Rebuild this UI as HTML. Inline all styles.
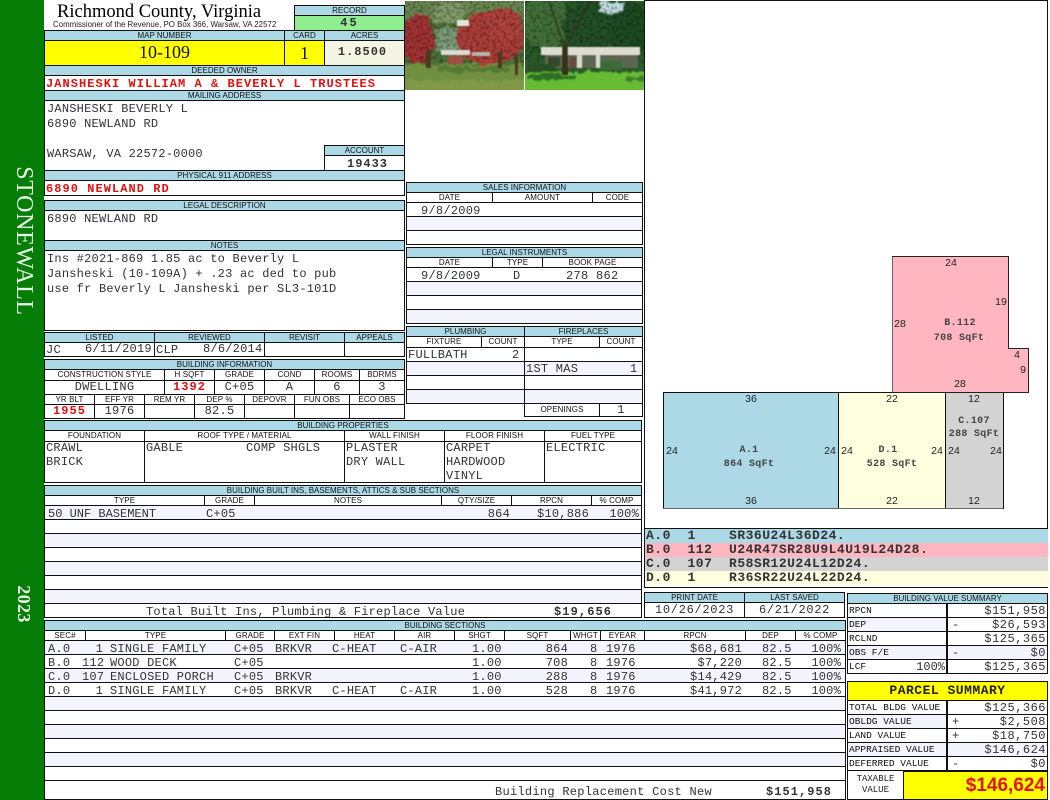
<!DOCTYPE html>
<html><head><meta charset="utf-8"><title>Richmond County, Virginia</title>
<style>
html,body{margin:0;padding:0;background:#fff;width:1050px;height:800px;overflow:hidden}
#p{position:relative;width:1050px;height:800px;overflow:hidden;background:#fff}
.c,.h,.m,.t,.s{position:absolute;box-sizing:border-box;overflow:hidden;white-space:pre}
.c{border:1px solid #111}
.h{border:1px solid #111;background:#add8e6;text-align:center;font:8px/9px "Liberation Sans",sans-serif;color:#111}
.w{background:#fff;letter-spacing:.1px}
.m{border:1px solid #111;font:12px/13px "Liberation Mono",monospace;color:#333;letter-spacing:.25px;padding:0 1px}
.t{font:12px/15px "Liberation Mono",monospace;color:#333;letter-spacing:.22px}
.r{text-align:right}.ct{text-align:center}
.a{background:#f4f4ff}
.red{color:#e01010;font-weight:bold;font-size:12px;letter-spacing:1.05px}
.s{font:9.5px/14px "Liberation Mono",monospace;color:#111;border:1px solid #111;padding-left:1px}
.b2{border-bottom:3px solid #111}
.l{position:absolute;font:10.5px/12px "Liberation Sans",sans-serif;color:#222;white-space:pre;transform:translateX(-50%)}
.k{position:absolute;font:bold 10px/12px "Liberation Mono",monospace;color:#444;letter-spacing:.3px;white-space:pre;transform:translateX(-50%)}
.code{position:absolute;font:bold 13px/14px "Liberation Mono",monospace;color:#333;letter-spacing:.5px;white-space:pre;left:645px;width:402px;height:14px;padding-left:1px}
.v{position:absolute;box-sizing:border-box;overflow:hidden;white-space:pre;border:1px solid #111;border-left-width:2px;font:12px/15px "Liberation Mono",monospace;color:#333;letter-spacing:.5px;text-align:right;padding-right:1px;left:946px;width:102px;height:15px}
.v span{position:absolute;left:4px;top:0}
.q{line-height:14px}
</style></head><body><div id="p">
<div style="position:absolute;left:0;top:0;width:44px;height:800px;background:#067d06"></div>
<div style="position:absolute;left:23.5px;top:240.5px;transform:translate(-50%,-50%) rotate(90deg);font:24px/26px 'Liberation Serif',serif;color:#e8f4e8;letter-spacing:.65px;white-space:pre">STONEWALL</div>
<div style="position:absolute;left:24px;top:604px;transform:translate(-50%,-50%) rotate(90deg);font:bold 18px/22px 'Liberation Serif',serif;color:#e8f4e8;letter-spacing:.4px;white-space:pre">2023</div>

<div class="t" style="left:57px;top:2px;font:18.5px/20px 'Liberation Serif',serif;color:#000;letter-spacing:0">Richmond County, Virginia</div>
<div class="t" style="left:53px;top:20px;font:7.9px/10px 'Liberation Sans',sans-serif;color:#222;letter-spacing:0">Commissioner of the Revenue, PO Box 366, Warsaw, VA 22572</div>
<div class="h" style="left:294px;top:5px;width:111px;height:11px">RECORD</div>
<div class="c" style="left:294px;top:15px;width:111px;height:16px;background:#90ee90;font:bold 12px/15px 'Liberation Mono',monospace;text-align:center;color:#333;letter-spacing:2px">45</div>
<div class="h" style="left:44px;top:30px;width:241px;height:11px">MAP NUMBER</div>
<div class="h" style="left:284px;top:30px;width:41px;height:11px">CARD</div>
<div class="h" style="left:324px;top:30px;width:81px;height:11px">ACRES</div>
<div class="c" style="left:44px;top:40px;width:241px;height:26px;background:#ff0;text-align:center;font:18px/23px 'Liberation Serif',serif;color:#111">10-109</div>
<div class="c" style="left:284px;top:40px;width:41px;height:26px;background:#ff0;text-align:center;font:18px/24px 'Liberation Serif',serif;color:#111">1</div>
<div class="c" style="left:324px;top:40px;width:81px;height:26px;background:#f5f5e4;text-align:center;font:bold 12px/23px 'Liberation Mono',monospace;letter-spacing:1px;color:#333;padding-right:4px">1.8500</div>
<div class="h" style="left:44px;top:65px;width:361px;height:11px">DEEDED OWNER</div>
<div class="m red" style="left:44px;top:75px;width:361px;height:16px;line-height:16px">JANSHESKI WILLIAM A &amp; BEVERLY L TRUSTEES</div>
<div class="h" style="left:44px;top:90px;width:361px;height:11px">MAILING ADDRESS</div>
<div class="c" style="left:44px;top:100px;width:361px;height:71px"></div>
<div class="t" style="left:47px;top:102px">JANSHESKI BEVERLY L
6890 NEWLAND RD

WARSAW, VA 22572-0000</div>
<div class="h" style="left:324px;top:145px;width:81px;height:11px">ACCOUNT</div>
<div class="m" style="left:324px;top:155px;width:81px;height:16px;font-weight:bold;letter-spacing:1px;line-height:16px;padding-left:22px">19433</div>
<div class="h" style="left:44px;top:170px;width:361px;height:11px">PHYSICAL 911 ADDRESS</div>
<div class="m red" style="left:44px;top:180px;width:361px;height:16px;line-height:16px">6890 NEWLAND RD</div>

<div class="h" style="left:44px;top:200px;width:361px;height:11px">LEGAL DESCRIPTION</div>
<div class="c" style="left:44px;top:210px;width:361px;height:31px"></div>
<div class="t" style="left:47px;top:212px">6890 NEWLAND RD</div>
<div class="h" style="left:44px;top:240px;width:361px;height:11px">NOTES</div>
<div class="c" style="left:44px;top:250px;width:361px;height:81px"></div>
<div class="t" style="left:47px;top:252px">Ins #2021-869 1.85 ac to Beverly L
Jansheski (10-109A) + .23 ac ded to pub
use fr Beverly L Jansheski per SL3-101D</div>

<div class="h" style="left:44px;top:332px;width:111px;height:11px">LISTED</div>
<div class="h" style="left:154px;top:332px;width:111px;height:11px">REVIEWED</div>
<div class="h" style="left:264px;top:332px;width:81px;height:11px">REVISIT</div>
<div class="h" style="left:344px;top:332px;width:61px;height:11px">APPEALS</div>
<div class="m" style="left:44px;top:342px;width:111px;height:15px;line-height:15px">JC</div>
<div class="t" style="left:85px;top:342px;line-height:15px">6/11/2019</div>
<div class="m" style="left:154px;top:342px;width:111px;height:15px;line-height:15px">CLP</div>
<div class="t" style="left:203px;top:342px;line-height:15px">8/6/2014</div>
<div class="m" style="left:264px;top:342px;width:81px;height:15px"></div>
<div class="m" style="left:344px;top:342px;width:61px;height:15px"></div>

<div class="h" style="left:44px;top:359px;width:361px;height:11px">BUILDING INFORMATION</div>
<div class="h w" style="left:44px;top:369px;width:121px;height:12px">CONSTRUCTION STYLE</div>
<div class="h w" style="left:164px;top:369px;width:51px;height:12px">H SQFT</div>
<div class="h w" style="left:214px;top:369px;width:51px;height:12px">GRADE</div>
<div class="h w" style="left:264px;top:369px;width:51px;height:12px">COND</div>
<div class="h w" style="left:314px;top:369px;width:46px;height:12px">ROOMS</div>
<div class="h w" style="left:359px;top:369px;width:46px;height:12px">BDRMS</div>
<div class="m ct" style="left:44px;top:380px;width:121px;height:15px">DWELLING</div>
<div class="m ct red" style="left:164px;top:380px;width:51px;height:15px">1392</div>
<div class="m ct" style="left:214px;top:380px;width:51px;height:15px">C+05</div>
<div class="m ct" style="left:264px;top:380px;width:51px;height:15px">A</div>
<div class="m ct" style="left:314px;top:380px;width:46px;height:15px">6</div>
<div class="m ct" style="left:359px;top:380px;width:46px;height:15px">3</div>
<div class="h w" style="left:44px;top:394px;width:51px;height:11px">YR BLT</div>
<div class="h w" style="left:94px;top:394px;width:51px;height:11px">EFF YR</div>
<div class="h w" style="left:144px;top:394px;width:51px;height:11px">REM YR</div>
<div class="h w" style="left:194px;top:394px;width:51px;height:11px">DEP %</div>
<div class="h w" style="left:244px;top:394px;width:51px;height:11px">DEPOVR</div>
<div class="h w" style="left:294px;top:394px;width:56px;height:11px">FUN OBS</div>
<div class="h w" style="left:349px;top:394px;width:56px;height:11px">ECO OBS</div>
<div class="m ct red" style="left:44px;top:404px;width:51px;height:15px">1955</div>
<div class="m ct" style="left:94px;top:404px;width:51px;height:15px">1976</div>
<div class="m" style="left:144px;top:404px;width:51px;height:15px"></div>
<div class="m ct" style="left:194px;top:404px;width:51px;height:15px">82.5</div>
<div class="m" style="left:244px;top:404px;width:51px;height:15px"></div>
<div class="m" style="left:294px;top:404px;width:56px;height:15px"></div>
<div class="m" style="left:349px;top:404px;width:56px;height:15px"></div>

<div class="h" style="left:44px;top:420px;width:598px;height:11px">BUILDING PROPERTIES</div>
<div class="h w" style="left:44px;top:430px;width:101px;height:12px">FOUNDATION</div>
<div class="h w" style="left:144px;top:430px;width:201px;height:12px">ROOF TYPE / MATERIAL</div>
<div class="h w" style="left:344px;top:430px;width:101px;height:12px">WALL FINISH</div>
<div class="h w" style="left:444px;top:430px;width:101px;height:12px">FLOOR FINISH</div>
<div class="h w" style="left:544px;top:430px;width:98px;height:12px">FUEL TYPE</div>
<div class="c" style="left:44px;top:441px;width:101px;height:42px"></div>
<div class="c" style="left:144px;top:441px;width:201px;height:42px"></div>
<div class="c" style="left:344px;top:441px;width:101px;height:42px"></div>
<div class="c" style="left:444px;top:441px;width:101px;height:42px"></div>
<div class="c" style="left:544px;top:441px;width:98px;height:42px"></div>
<div class="t" style="left:46px;top:441px;line-height:14px">CRAWL
BRICK</div>
<div class="t" style="left:146px;top:441px;line-height:14px">GABLE</div>
<div class="t" style="left:246px;top:441px;line-height:14px">COMP SHGLS</div>
<div class="t" style="left:346px;top:441px;line-height:14px">PLASTER
DRY WALL</div>
<div class="t" style="left:446px;top:441px;line-height:14px">CARPET
HARDWOOD
VINYL</div>
<div class="t" style="left:546px;top:441px;line-height:14px">ELECTRIC</div>

<div class="h" style="left:44px;top:485px;width:598px;height:11px">BUILDING BUILT INS, BASEMENTS, ATTICS &amp; SUB SECTIONS</div>
<div class="h w" style="left:44px;top:495px;width:161px;height:11px">TYPE</div>
<div class="h w" style="left:204px;top:495px;width:51px;height:11px">GRADE</div>
<div class="h w" style="left:254px;top:495px;width:188px;height:11px">NOTES</div>
<div class="h w" style="left:441px;top:495px;width:71px;height:11px">QTY/SIZE</div>
<div class="h w" style="left:511px;top:495px;width:81px;height:11px">RPCN</div>
<div class="h w" style="left:591px;top:495px;width:51px;height:11px">% COMP</div>
<div class="m a" style="left:44px;top:505px;width:598px;height:15px"></div>
<div class="t q" style="left:48px;top:507px;letter-spacing:0">50 UNF BASEMENT</div>
<div class="t q" style="left:206px;top:507px">C+05</div>
<div class="t r q" style="left:441px;top:507px;width:69px">864</div>
<div class="t r q" style="left:511px;top:507px;width:78px">$10,886</div>
<div class="t r q" style="left:591px;top:507px;width:48px">100%</div>
<div class="m" style="left:44px;top:519px;width:598px;height:15px"></div>
<div class="m a" style="left:44px;top:533px;width:598px;height:15px"></div>
<div class="m" style="left:44px;top:547px;width:598px;height:15px"></div>
<div class="m a" style="left:44px;top:561px;width:598px;height:15px"></div>
<div class="m" style="left:44px;top:575px;width:598px;height:15px"></div>
<div class="m a" style="left:44px;top:589px;width:598px;height:15px"></div>
<div class="c" style="left:44px;top:603px;width:598px;height:15px"></div>
<div class="t q" style="left:146px;top:605px">Total Built Ins, Plumbing &amp; Fireplace Value</div>
<div class="t q" style="left:554px;top:605px;font-weight:bold;letter-spacing:1.1px">$19,656</div>

<div class="h" style="left:44px;top:620px;width:802px;height:11px">BUILDING SECTIONS</div>
<div class="h w" style="left:44px;top:630px;width:42px;height:11px">SEC#</div>
<div class="h w" style="left:85px;top:630px;width:141px;height:11px">TYPE</div>
<div class="h w" style="left:225px;top:630px;width:50px;height:11px">GRADE</div>
<div class="h w" style="left:274px;top:630px;width:61px;height:11px">EXT FIN</div>
<div class="h w" style="left:334px;top:630px;width:61px;height:11px">HEAT</div>
<div class="h w" style="left:394px;top:630px;width:61px;height:11px">AIR</div>
<div class="h w" style="left:454px;top:630px;width:51px;height:11px">SHGT</div>
<div class="h w" style="left:504px;top:630px;width:67px;height:11px">SQFT</div>
<div class="h w" style="left:570px;top:630px;width:31px;height:11px">WHGT</div>
<div class="h w" style="left:600px;top:630px;width:45px;height:11px">EYEAR</div>
<div class="h w" style="left:644px;top:630px;width:102px;height:11px">RPCN</div>
<div class="h w" style="left:745px;top:630px;width:51px;height:11px">DEP</div>
<div class="h w" style="left:795px;top:630px;width:51px;height:11px">% COMP</div>
<div class="m a" style="left:44px;top:640px;width:802px;height:15px"></div>
<div class="m" style="left:44px;top:654px;width:802px;height:15px"></div>
<div class="m a" style="left:44px;top:668px;width:802px;height:15px"></div>
<div class="m" style="left:44px;top:682px;width:802px;height:15px"></div>
<div class="m a" style="left:44px;top:696px;width:802px;height:15px"></div>
<div class="m" style="left:44px;top:710px;width:802px;height:15px"></div>
<div class="m a" style="left:44px;top:724px;width:802px;height:15px"></div>
<div class="m" style="left:44px;top:738px;width:802px;height:15px"></div>
<div class="m a" style="left:44px;top:752px;width:802px;height:15px"></div>
<div class="m" style="left:44px;top:766px;width:802px;height:15px"></div>
<div class="c" style="left:44px;top:780px;width:802px;height:20px"></div>

<div class="t q" style="left:48px;top:642px">A.0</div><div class="t r q" style="left:82px;top:642px;width:21px">1</div><div class="t q" style="left:110px;top:642px">SINGLE FAMILY</div><div class="t q" style="left:234px;top:642px">C+05</div><div class="t q" style="left:275px;top:642px">BRKVR</div><div class="t q" style="left:332px;top:642px">C-HEAT</div><div class="t q" style="left:400px;top:642px">C-AIR</div><div class="t q" style="left:472px;top:642px">1.00</div><div class="t r q" style="left:510px;top:642px;width:58px">864</div><div class="t q" style="left:590px;top:642px">8</div><div class="t q" style="left:606px;top:642px">1976</div><div class="t r q" style="left:650px;top:642px;width:92px">$68,681</div><div class="t q" style="left:762px;top:642px">82.5</div><div class="t r q" style="left:800px;top:642px;width:41px">100%</div>
<div class="t q" style="left:48px;top:656px">B.0</div><div class="t r q" style="left:82px;top:656px;width:21px">112</div><div class="t q" style="left:110px;top:656px">WOOD DECK</div><div class="t q" style="left:234px;top:656px">C+05</div><div class="t q" style="left:472px;top:656px">1.00</div><div class="t r q" style="left:510px;top:656px;width:58px">708</div><div class="t q" style="left:590px;top:656px">8</div><div class="t q" style="left:606px;top:656px">1976</div><div class="t r q" style="left:650px;top:656px;width:92px">$7,220</div><div class="t q" style="left:762px;top:656px">82.5</div><div class="t r q" style="left:800px;top:656px;width:41px">100%</div>
<div class="t q" style="left:48px;top:670px">C.0</div><div class="t r q" style="left:82px;top:670px;width:21px">107</div><div class="t q" style="left:110px;top:670px">ENCLOSED PORCH</div><div class="t q" style="left:234px;top:670px">C+05</div><div class="t q" style="left:275px;top:670px">BRKVR</div><div class="t q" style="left:472px;top:670px">1.00</div><div class="t r q" style="left:510px;top:670px;width:58px">288</div><div class="t q" style="left:590px;top:670px">8</div><div class="t q" style="left:606px;top:670px">1976</div><div class="t r q" style="left:650px;top:670px;width:92px">$14,429</div><div class="t q" style="left:762px;top:670px">82.5</div><div class="t r q" style="left:800px;top:670px;width:41px">100%</div>
<div class="t q" style="left:48px;top:684px">D.0</div><div class="t r q" style="left:82px;top:684px;width:21px">1</div><div class="t q" style="left:110px;top:684px">SINGLE FAMILY</div><div class="t q" style="left:234px;top:684px">C+05</div><div class="t q" style="left:275px;top:684px">BRKVR</div><div class="t q" style="left:332px;top:684px">C-HEAT</div><div class="t q" style="left:400px;top:684px">C-AIR</div><div class="t q" style="left:472px;top:684px">1.00</div><div class="t r q" style="left:510px;top:684px;width:58px">528</div><div class="t q" style="left:590px;top:684px">8</div><div class="t q" style="left:606px;top:684px">1976</div><div class="t r q" style="left:650px;top:684px;width:92px">$41,972</div><div class="t q" style="left:762px;top:684px">82.5</div><div class="t r q" style="left:800px;top:684px;width:41px">100%</div>
<div class="t q" style="left:495px;top:785px;letter-spacing:.28px">Building Replacement Cost New</div>
<div class="t q" style="left:766px;top:785px;font-weight:bold;letter-spacing:1.05px">$151,958</div>

<svg style="position:absolute;left:405px;top:0" width="240" height="90" viewBox="405 0 240 90">
<defs>
<filter id="f" x="-10%" y="-10%" width="120%" height="120%"><feTurbulence type="fractalNoise" baseFrequency=".14" numOctaves="2" seed="4" result="n"/><feDisplacementMap in="SourceGraphic" in2="n" scale="9" xChannelSelector="R" yChannelSelector="G"/><feGaussianBlur stdDeviation=".7"/></filter>
<filter id="g"><feGaussianBlur stdDeviation=".5"/></filter>
<filter id="n" x="0" y="0" width="100%" height="100%"><feTurbulence type="fractalNoise" baseFrequency=".3" numOctaves="2" seed="7"/><feColorMatrix values="0 0 0 0 0 0 0 0 0 0 0 0 0 0 0 0 0 0 2 -.85"/></filter>
<clipPath id="cl"><rect x="405" y="1" width="119" height="89"/></clipPath>
<clipPath id="cr"><rect x="525" y="1" width="119" height="89"/></clipPath>
</defs>
<rect x="405" y="1" width="119" height="89" fill="#4f7038"/>
<rect x="525" y="1" width="119" height="89" fill="#2a5a2a"/>
<g clip-path="url(#cl)"><g filter="url(#f)">
<rect x="400" y="-4" width="130" height="24" fill="#68864f"/>
<rect x="434" y="4" width="30" height="20" fill="#7f9a66"/>
<rect x="436" y="28" width="36" height="24" fill="#7c9c78"/>
<ellipse cx="418" cy="39" rx="17" ry="25" fill="#a03232"/>
<ellipse cx="490" cy="38" rx="34" ry="27" fill="#ab3e38"/>
<ellipse cx="505" cy="24" rx="17" ry="17" fill="#b0423c"/>
<rect x="400" y="64" width="130" height="30" fill="#6f9040"/>
<rect x="400" y="80" width="130" height="14" fill="#80994a"/>
<rect x="440" y="66" width="70" height="6" fill="#557a36"/>
</g></g>
<g clip-path="url(#cr)"><g filter="url(#f)">
<ellipse cx="545" cy="22" rx="24" ry="26" fill="#3f7038"/>
<ellipse cx="590" cy="25" rx="27" ry="25" fill="#234f28"/>
<ellipse cx="630" cy="30" rx="20" ry="28" fill="#1f4c22"/>
<rect x="600" y="2" width="25" height="11" fill="#bfdde0"/>
<rect x="520" y="72" width="130" height="22" fill="#66bb33"/>
<rect x="527" y="74" width="50" height="6" fill="#2f6f28"/>
<rect x="625" y="77" width="22" height="4" fill="#3a7e2c"/>
</g></g>
<rect x="405" y="1" width="239" height="62" filter="url(#n)" opacity=".45"/>
<g filter="url(#g)">
<rect x="457" y="20" width="12" height="6" fill="#dfe8e0"/>
<rect x="441" y="50" width="29" height="5" fill="#dcdcd4"/>
<rect x="448" y="56" width="15" height="8" fill="#9e4f42"/>
<rect x="472" y="52" width="18" height="4" fill="#b5b5ac"/>
<rect x="541" y="47" width="99" height="8" fill="#dedcd2"/>
<rect x="545" y="55" width="93" height="13" fill="#5a6650"/>
<rect x="548" y="57" width="12" height="9" fill="#39442e"/>
<rect x="570" y="57" width="6" height="11" fill="#6a4a3a"/>
<rect x="577" y="55" width="5" height="13" fill="#d8d8cc"/>
<rect x="596" y="55" width="4" height="13" fill="#d8d8cc"/>
<rect x="528" y="64" width="28" height="7" fill="#2a5024"/>
<rect x="600" y="61" width="22" height="9" fill="#3e6a34"/>
<rect x="562" y="46" width="6" height="29" fill="#38301e"/>
<path d="M565 48 L549 2 M565 48 L590 2" stroke="#38301e" stroke-width="1.4" fill="none"/>
<rect x="426" y="50" width="5" height="18" fill="#4a3a24"/>
<rect x="498" y="52" width="4" height="16" fill="#4a3a24"/>
<rect x="515" y="54" width="3" height="21" fill="#4a3a24"/>
</g>
<rect x="524" y="0" width="1" height="90" fill="#fff"/>
</svg>

<div style="position:absolute;left:644px;top:0;width:404px;height:529px;box-sizing:border-box;border:1px solid #111"></div>

<div class="h" style="left:406px;top:182px;width:237px;height:11px">SALES INFORMATION</div>
<div class="h w" style="left:406px;top:192px;width:87px;height:11px">DATE</div>
<div class="h w" style="left:492px;top:192px;width:101px;height:11px">AMOUNT</div>
<div class="h w" style="left:592px;top:192px;width:51px;height:11px">CODE</div>
<div class="m" style="left:406px;top:202px;width:237px;height:15px;padding-left:14px;line-height:16px">9/8/2009</div>
<div class="m a" style="left:406px;top:216px;width:237px;height:15px"></div>
<div class="m" style="left:406px;top:230px;width:237px;height:15px"></div>
<div class="h" style="left:406px;top:247px;width:237px;height:11px">LEGAL INSTRUMENTS</div>
<div class="h w" style="left:406px;top:257px;width:87px;height:11px">DATE</div>
<div class="h w" style="left:492px;top:257px;width:51px;height:11px">TYPE</div>
<div class="h w" style="left:542px;top:257px;width:101px;height:11px">BOOK PAGE</div>
<div class="m" style="left:406px;top:267px;width:237px;height:15px;padding-left:14px;line-height:16px">9/8/2009</div>
<div class="t" style="left:513px;top:269px;line-height:14px">D</div>
<div class="t" style="left:566px;top:269px;line-height:14px;letter-spacing:.3px">278 862</div>
<div class="m a" style="left:406px;top:281px;width:237px;height:15px"></div>
<div class="m" style="left:406px;top:295px;width:237px;height:15px"></div>
<div class="m a" style="left:406px;top:309px;width:237px;height:15px"></div>

<div class="h" style="left:406px;top:326px;width:119px;height:11px">PLUMBING</div>
<div class="h" style="left:524px;top:326px;width:119px;height:11px">FIREPLACES</div>
<div class="h w" style="left:406px;top:336px;width:76px;height:12px">FIXTURE</div>
<div class="h w" style="left:481px;top:336px;width:44px;height:12px">COUNT</div>
<div class="h w" style="left:524px;top:336px;width:76px;height:12px">TYPE</div>
<div class="h w" style="left:599px;top:336px;width:44px;height:12px">COUNT</div>
<div class="m" style="left:406px;top:347px;width:119px;height:15px;line-height:15px">FULLBATH</div>
<div class="t" style="left:512px;top:348px;line-height:14px">2</div>
<div class="m a" style="left:406px;top:361px;width:119px;height:15px"></div>
<div class="m" style="left:406px;top:375px;width:119px;height:15px"></div>
<div class="m a" style="left:406px;top:389px;width:119px;height:15px"></div>
<div class="m" style="left:524px;top:347px;width:119px;height:15px"></div>
<div class="m a" style="left:524px;top:361px;width:119px;height:15px;line-height:15px">1ST MAS</div>
<div class="t" style="left:630px;top:362px;line-height:14px">1</div>
<div class="m" style="left:524px;top:375px;width:119px;height:15px"></div>
<div class="m a" style="left:524px;top:389px;width:119px;height:15px"></div>
<div class="h w" style="left:524px;top:403px;width:76px;height:14px;line-height:12px">OPENINGS</div>
<div class="m ct" style="left:599px;top:403px;width:44px;height:14px;line-height:13px">1</div>

<svg style="position:absolute;left:644px;top:240px" width="404" height="280" viewBox="644 240 404 280">
<rect x="663.5" y="392.5" width="175" height="116" fill="#add8e6" stroke="#111"/>
<rect x="838.5" y="392.5" width="107" height="116" fill="#ffffe0" stroke="#111"/>
<rect x="945.5" y="392.5" width="58" height="116" fill="#d3d3d3" stroke="#111"/>
<path d="M892.5 392.5V256.5H1008.5V348.5H1028.5V392.5Z" fill="#ffb6c1" stroke="#222"/>
<path d="M663 508.5H1003M892.5 392V257" stroke="#666" fill="none"/>
</svg>
<div class="l" style="left:751px;top:393px">36</div>
<div class="l" style="left:751px;top:495px">36</div>
<div class="l" style="left:672px;top:445px">24</div>
<div class="l" style="left:830px;top:445px">24</div>
<div class="l" style="left:892px;top:393px">22</div>
<div class="l" style="left:892px;top:495px">22</div>
<div class="l" style="left:847px;top:445px">24</div>
<div class="l" style="left:937px;top:445px">24</div>
<div class="l" style="left:974px;top:393px">12</div>
<div class="l" style="left:974px;top:495px">12</div>
<div class="l" style="left:954px;top:445px">24</div>
<div class="l" style="left:996px;top:445px">24</div>
<div class="l" style="left:951px;top:257px">24</div>
<div class="l" style="left:1001px;top:296px">19</div>
<div class="l" style="left:900px;top:318px">28</div>
<div class="l" style="left:1017px;top:349px">4</div>
<div class="l" style="left:1023px;top:364px">9</div>
<div class="l" style="left:960px;top:378px">28</div>
<div class="k" style="left:749px;top:445px">A.1</div>
<div class="k" style="left:749px;top:459px">864 SqFt</div>
<div class="k" style="left:888px;top:445px">D.1</div>
<div class="k" style="left:892px;top:459px">528 SqFt</div>
<div class="k" style="left:974px;top:416px">C.107</div>
<div class="k" style="left:974px;top:429px">288 SqFt</div>
<div class="k" style="left:960px;top:318px">B.112</div>
<div class="k" style="left:959px;top:333px">708 SqFt</div>

<div class="code" style="top:529px;background:#add8e6">A.0  1    SR36U24L36D24.</div>
<div class="code" style="top:543px;background:#ffb6c1">B.0  112  U24R47SR28U9L4U19L24D28.</div>
<div class="code" style="top:557px;background:#d3d3d3">C.0  107  R58SR12U24L12D24.</div>
<div class="code" style="top:571px;background:#ffffe0">D.0  1    R36SR22U24L22D24.</div>
<div style="position:absolute;left:644px;top:528px;width:1px;height:60px;background:#111"></div>
<div style="position:absolute;left:644px;top:587px;width:404px;height:1px;background:#111"></div>

<div class="h" style="left:644px;top:592px;width:101px;height:11px">PRINT DATE</div>
<div class="h" style="left:744px;top:592px;width:101px;height:11px">LAST SAVED</div>
<div class="m ct" style="left:644px;top:602px;width:101px;height:16px;line-height:14px;letter-spacing:.7px">10/26/2023</div>
<div class="m ct" style="left:744px;top:602px;width:101px;height:16px;line-height:14px;letter-spacing:.7px">6/21/2022</div>

<div class="h" style="left:847px;top:593px;width:201px;height:11px">BUILDING VALUE SUMMARY</div>
<div class="s" style="left:847px;top:603px;width:100px;height:15px">RPCN</div>
<div class="s a" style="left:847px;top:617px;width:100px;height:15px">DEP</div>
<div class="s" style="left:847px;top:631px;width:100px;height:15px">RCLND</div>
<div class="s a" style="left:847px;top:645px;width:100px;height:15px">OBS F/E</div>
<div class="s" style="left:847px;top:659px;width:100px;height:15px">LCF<span style="position:absolute;right:1px;top:0;font:12px/15px 'Liberation Mono',monospace;color:#333">100%</span></div>
<div class="v" style="top:603px">$151,958</div>
<div class="v b2" style="top:617px;line-height:14px">$26,593<span>-</span></div>
<div class="v" style="top:631px">$125,365</div>
<div class="v a b2" style="top:645px;line-height:14px">$0<span>-</span></div>
<div class="v" style="top:659px">$125,365</div>

<div class="c" style="left:847px;top:681px;width:201px;height:20px;background:#ff0;text-align:center;font:bold 13px/18px 'Liberation Mono',monospace;color:#222;letter-spacing:.5px">PARCEL SUMMARY</div>
<div class="s" style="left:847px;top:700px;width:100px;height:15px">TOTAL BLDG VALUE</div>
<div class="s a" style="left:847px;top:714px;width:100px;height:15px">OBLDG VALUE</div>
<div class="s" style="left:847px;top:728px;width:100px;height:15px">LAND VALUE</div>
<div class="s a" style="left:847px;top:742px;width:100px;height:15px">APPRAISED VALUE</div>
<div class="s" style="left:847px;top:756px;width:100px;height:15px">DEFERRED VALUE</div>
<div class="v" style="top:700px">$125,366</div>
<div class="v" style="top:714px">$2,508<span>+</span></div>
<div class="v b2" style="top:728px;line-height:14px">$18,750<span>+</span></div>
<div class="v a" style="top:742px">$146,624</div>
<div class="v b2" style="top:756px;line-height:14px">$0<span>-</span></div>
<div class="c ct" style="left:847px;top:770px;width:57px;height:30px;font:9px/11px 'Liberation Mono',monospace;color:#222;text-align:center;padding-top:3px">TAXABLE
VALUE</div>
<div class="c" style="left:903px;top:770px;width:145px;height:30px;background:#ff0;text-align:right;font:bold 19px/27px 'Liberation Sans',sans-serif;color:#e01414;padding-right:2px;border-top-width:2px">$146,624</div>
</div></body></html>
